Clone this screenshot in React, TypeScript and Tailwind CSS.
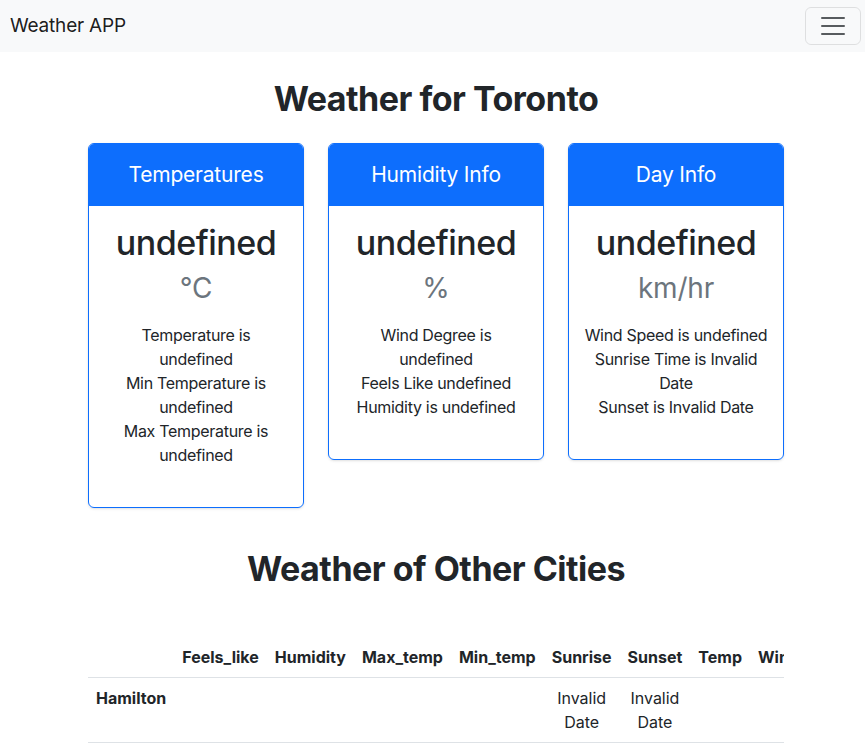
import React from 'react';

const cards = [
  {
    title: 'Temperatures',
    unit: '°C',
    lines: ['Temperature is undefined', 'Min Temperature is undefined', 'Max Temperature is undefined'],
  },
  {
    title: 'Humidity Info',
    unit: '%',
    lines: ['Wind Degree is undefined', 'Feels Like undefined', 'Humidity is undefined'],
  },
  {
    title: 'Day Info',
    unit: 'km/hr',
    lines: ['Wind Speed is undefined', 'Sunrise Time is Invalid Date', 'Sunset is Invalid Date'],
  },
];

const columns = ['Feels_like', 'Humidity', 'Max_temp', 'Min_temp', 'Sunrise', 'Sunset', 'Temp', 'Wind_deg', 'Wind_speed'];

export default function App() {
  return (
    <div className="min-h-screen bg-white text-[#212529] font-['Inter',sans-serif] tracking-[-0.2px]">
      {/* Navbar */}
      <nav className="flex h-[52px] items-center justify-between bg-[#f8f9fa] pl-[10px] pr-[4px]">
        <span className="text-[19px] text-black/90">Weather APP</span>
        <button className="flex h-[38px] w-[56px] items-center justify-center rounded-md border border-black/10">
          <svg width="30" height="30" viewBox="0 0 30 30">
            <path d="M4 7h22M4 15h22M4 23h22" stroke="rgba(33,37,41,0.75)" strokeWidth="2" strokeLinecap="round" />
          </svg>
        </button>
      </nav>

      <div className="ml-[88px] w-[696px]">
        <h1 className="mt-[26px] text-center text-[34px] leading-[42px] font-bold tracking-[-0.5px]">Weather for Toronto</h1>

        <div className="mt-[23px] flex items-start gap-6">
          {cards.map((c) => (
            <div key={c.title} className="w-[216px] overflow-hidden rounded-md border border-[#0d6efd] shadow-sm">
              <div className="flex h-[62px] items-center justify-center bg-[#0d6efd] text-[21px] text-white">
                {c.title}
              </div>
              <div className="px-[14px] pt-4 pb-[40px] text-center">
                <div className="text-[34px] leading-[42px] font-medium tracking-[-0.5px]">undefined</div>
                <div className="mt-[7px] text-[28px] leading-[34px] text-[#6c757d]">{c.unit}</div>
                <div className="mt-[18px] text-[16px] leading-6 tracking-[-0.3px]">
                  {c.lines.map((l) => (
                    <div key={l}>{l}</div>
                  ))}
                </div>
              </div>
            </div>
          ))}
        </div>

        <h1 className="mt-[40px] text-center text-[34px] leading-[42px] font-bold tracking-[-0.5px]">Weather of Other Cities</h1>

        <div className="mt-[47px] overflow-x-auto">
          <table className="w-full border-collapse text-center text-[16px] leading-6 tracking-normal">
            <thead>
              <tr className="border-b border-[#dee2e6]">
                <th className="p-2"></th>
                {columns.map((col) => (
                  <th key={col} className="p-2 font-bold">{col}</th>
                ))}
              </tr>
            </thead>
            <tbody>
              <tr className="border-b border-[#dee2e6] align-top">
                <th className="p-2 text-left font-bold">Hamilton</th>
                <td className="p-2"></td>
                <td className="p-2"></td>
                <td className="p-2"></td>
                <td className="p-2"></td>
                <td className="p-2">Invalid Date</td>
                <td className="p-2">Invalid Date</td>
                <td className="p-2"></td>
                <td className="p-2"></td>
                <td className="p-2"></td>
              </tr>
            </tbody>
          </table>
        </div>
      </div>
    </div>
  );
}
